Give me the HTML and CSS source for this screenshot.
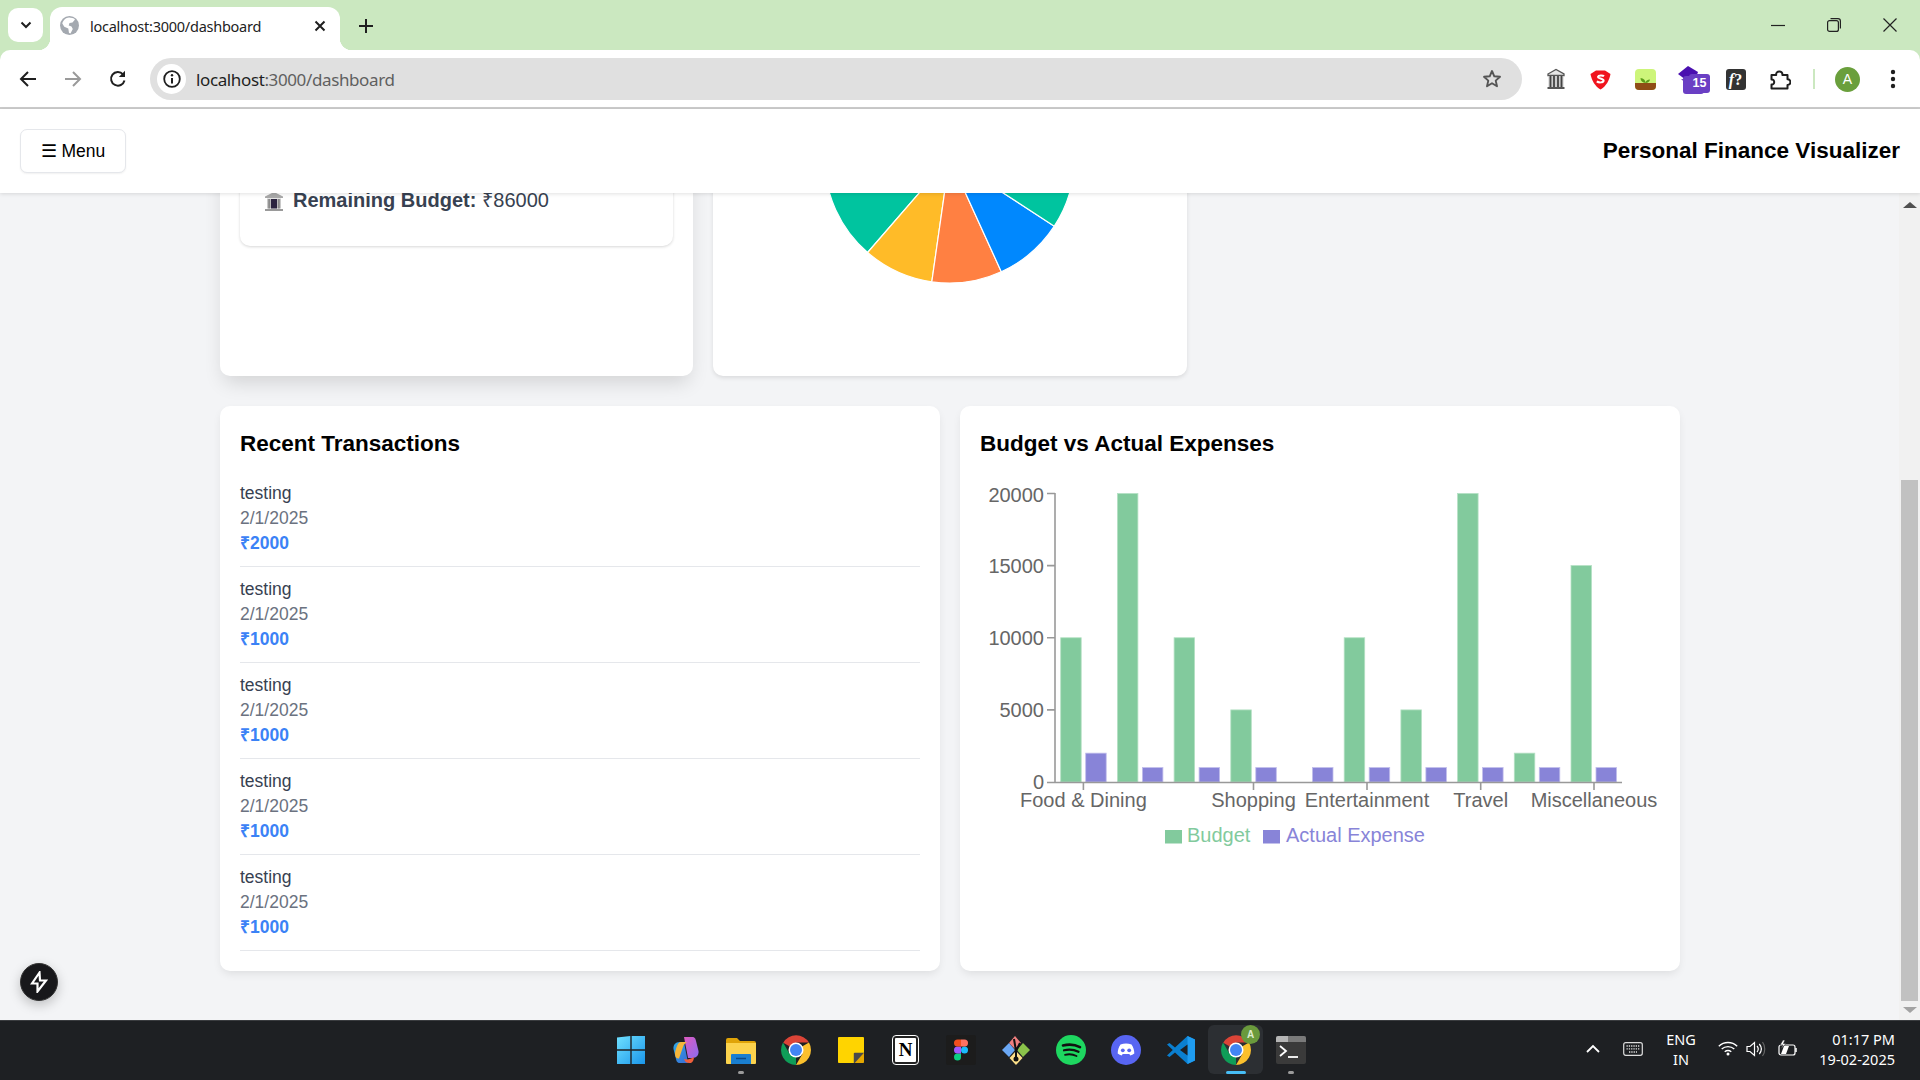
FILE: index.html
```html
<!DOCTYPE html>
<html lang="en">
<head>
<meta charset="utf-8">
<title>Personal Finance Visualizer</title>
<link rel="stylesheet" href="styles.css">
</head>
<body>
<div class="tabstrip">
  <button class="tabmenu"><svg width="14" height="14" viewBox="0 0 14 14"><path d="M2.500 4.500 7 9l4.500-4.500" fill="none" stroke="#1f1f1f" stroke-width="2"/></svg></button>
  <div class="tab">
    <svg class="globe" width="19" height="19" viewBox="0 0 19 19"><circle cx="9.500" cy="9.500" r="9.500" fill="#a4a9b0"/><path d="M9 1.500c2 .5 5 .4 6 2l-2.500 3-3 .6-.8 2.400 2.800 1 1.300 2.500-2.300 4.500-1.500-.5-.7-4.500-4-1.800-2-3.200C3 4 6 1.800 9 1.500Z" fill="#fff"/></svg>
    <span class="tabtitle">localhost:3000/dashboard</span>
    <svg class="tabclose" width="12" height="12" viewBox="0 0 12 12"><path d="M1.500 1.500l9 9m0-9-9 9" stroke="#1f1f1f" stroke-width="2"/></svg>
  </div>
  <div class="newtab"><svg width="14" height="14" viewBox="0 0 14 14"><path d="M7 0v14M0 7h14" stroke="#1f1f1f" stroke-width="2"/></svg></div>
  <div class="winctl">
    <span class="wincell"><svg width="14" height="14" viewBox="0 0 14 14"><path d="M0 7.500h14" stroke="#222" stroke-width="1.200"/></svg></span>
    <span class="wincell"><svg width="14" height="14" viewBox="0 0 14 14"><rect x=".6" y="2.600" width="10.800" height="10.800" rx="2" fill="none" stroke="#222" stroke-width="1.200"/><path d="M3.500.6h7.500a2.400 2.400 0 0 1 2.400 2.400v7.500" fill="none" stroke="#222" stroke-width="1.200"/></svg></span>
    <span class="wincell"><svg width="14" height="14" viewBox="0 0 14 14"><path d="M.5.500l13 13m0-13-13 13" stroke="#222" stroke-width="1.200"/></svg></span>
  </div>
</div>

<nav class="toolbar">
  <span class="navcell"><svg width="18" height="18" viewBox="0 0 18 18"><path d="M17 9H2M9 2 2 9l7 7" fill="none" stroke="#1f1f1f" stroke-width="2"/></svg></span>
  <span class="navcell"><svg width="18" height="18" viewBox="0 0 18 18"><path d="M1 9h15M9 2l7 7-7 7" fill="none" stroke="#9a9a9a" stroke-width="2"/></svg></span>
  <span class="navcell"><svg width="18" height="18" viewBox="0 0 18 18"><path d="M15.500 10.500A6.800 6.800 0 1 1 14 4.300" fill="none" stroke="#1f1f1f" stroke-width="2"/><path d="M16 .8v6.200H9.800z" fill="#1f1f1f"/></svg></span>
  <div class="address">
    <span class="siteinfo"><svg width="18" height="18" viewBox="0 0 18 18"><circle cx="9" cy="9" r="7.800" fill="none" stroke="#1f1f1f" stroke-width="1.800"/><path d="M9 8v5.500" stroke="#1f1f1f" stroke-width="2"/><circle cx="9" cy="5.200" r="1.200" fill="#1f1f1f"/></svg></span>
    <span class="url"><span class="host">localhost</span>:3000/dashboard</span>
    <span class="star"><svg width="20" height="20" viewBox="0 0 20 20"><path d="M10 2l2.300 5.300 5.700.5-4.300 3.800 1.300 5.600-5-3-5 3 1.300-5.600L2 7.800l5.700-.5z" fill="none" stroke="#555" stroke-width="1.900" stroke-linejoin="round"/></svg></span>
  </div>
  <div class="exts">
    <span class="navcell"><svg width="20" height="22" viewBox="0 0 20 22"><path d="M2 6 10 1.500 18 6v1.500H2z" fill="#e6e6e6" stroke="#555" stroke-width="1.300"/><path d="M2.500 8h15v11h-15z" fill="#ccc"/><path d="M4.500 8v11M8 8v11M12 8v11M15.500 8v11" stroke="#444" stroke-width="1.800"/><path d="M1.500 20h17" stroke="#555" stroke-width="2"/></svg></span>
    <span class="navcell"><svg width="21" height="21" viewBox="0 0 21 21"><path d="M10.500 20.500C5 17.500 1.500 11 .5 5L6 1.500h9L20.500 5c-1 6-4.500 12.500-10 15.500Z" fill="#f0141e"/><path d="M14 7.200c-1-1-5.500-1.200-6 .6-.4 2 6 1.400 5.600 4-.4 2-5 2-6.800.6" fill="none" stroke="#fff" stroke-width="2"/></svg></span>
    <span class="navcell"><svg width="21" height="21" viewBox="0 0 21 21"><rect width="21" height="21" rx="4" fill="#cdf57a"/><path d="M0 14h21v3a4 4 0 0 1-4 4H4a4 4 0 0 1-4-4z" fill="#8f4d16"/><path d="M10.500 14c0-3-2-4.500-5-5 0 3 2 4.500 5 5Zm0 0c0-2 2-3.500 4.500-3.500-.5 2-2 3.500-4.500 3.500Z" fill="#5c9e1a"/></svg></span>
    <span class="navcell ext-badge"><svg width="26" height="30" viewBox="0 0 26 30"><path d="M0 9 10 1l10 6-3 8H8L4 12z" fill="#4a10b0"/><path d="M3 14l6 5h8v-4H8z" fill="#3a0a96"/><rect x="8" y="10" width="21" height="18" rx="3" fill="#6a3fc4" transform="translate(-3 1)"/></svg><span class="badge15">15</span></span>
    <span class="navcell"><span class="fq"><i>f</i>?</span></span>
    <span class="navcell"><svg width="21" height="21" viewBox="0 0 21 21"><path d="M1.500 6h4.700c-.8-4.500 6.800-5 6.200 0h5.100v4.300c4-.3 3.700 6 0 5.700v3.500H1.500v-4c3.600.6 3.600-5.400 0-5z" fill="none" stroke="#1f1f1f" stroke-width="2" stroke-linejoin="round"/></svg></span>
  </div>
  <span class="tooldiv"></span>
  <span class="navcell avatarcell"><span class="avatar">A</span></span>
  <span class="navcell"><svg width="6" height="20" viewBox="0 0 6 20"><circle cx="3" cy="3" r="2.200" fill="#1f1f1f"/><circle cx="3" cy="10" r="2.200" fill="#1f1f1f"/><circle cx="3" cy="17" r="2.200" fill="#1f1f1f"/></svg></span>
</nav>

<header class="apphead">
  <button class="menubtn">☰ Menu</button>
  <h1 class="apptitle">Personal Finance Visualizer</h1>
</header>

<div class="viewport">
  <main class="page">
    <div class="toprow">
      <section class="card card-raised">
        <div class="summary">
          <p class="remaining">
            <svg class="bank" width="20" height="20" viewBox="0 0 20 20"><path d="M1 5.500 10 1l9 4.500V7H1z" fill="#a9a9a9"/><path d="M3 7.500h14v10H3z" fill="#c9c9c9"/><path d="M7 8h6v9.500H7z" fill="#2c2440"/><path d="M5.200 8v9.500M14.800 8v9.500" stroke="#8a8a8a" stroke-width="2"/><path d="M1 18h18v2H1z" fill="#9a9a9a"/></svg>
            <strong>Remaining Budget:</strong>
            <span>₹86000</span>
          </p>
        </div>
      </section>
      <section class="card card-pie">
        <svg class="pie" width="473" height="228" viewBox="713 148 473 228">
          <g stroke="#fff" stroke-width="1.200">
            <path d="M949.500 158 824.500 158A125 125 0 0 0 867.600 252.500Z" fill="#00C49F"/>
            <path d="M949.500 158 867.600 252.500A125 125 0 0 0 931.800 281.800Z" fill="#FFBB28"/>
            <path d="M949.500 158 931.800 281.800A125 125 0 0 0 1001.300 271.700Z" fill="#FF8042"/>
            <path d="M949.500 158 1001.300 271.700A125 125 0 0 0 1054.300 226.200Z" fill="#0088FE"/>
            <path d="M949.500 158 1054.300 226.200A125 125 0 0 0 1074.500 158Z" fill="#00C49F"/>
          </g>
        </svg>
      </section>
    </div>
    <div class="bottomrow">
      <section class="card card-pad">
        <h2 class="cardtitle">Recent Transactions</h2>
        <ul class="txlist">
          <li class="tx"><span class="txname">testing</span><span class="txdate">2/1/2025</span><span class="txamt">₹2000</span></li>
          <li class="tx"><span class="txname">testing</span><span class="txdate">2/1/2025</span><span class="txamt">₹1000</span></li>
          <li class="tx"><span class="txname">testing</span><span class="txdate">2/1/2025</span><span class="txamt">₹1000</span></li>
          <li class="tx"><span class="txname">testing</span><span class="txdate">2/1/2025</span><span class="txamt">₹1000</span></li>
          <li class="tx"><span class="txname">testing</span><span class="txdate">2/1/2025</span><span class="txamt">₹1000</span></li>
        </ul>
      </section>
      <section class="card card-pad">
        <h2 class="cardtitle">Budget vs Actual Expenses</h2>
        <svg class="chart" width="680" height="400" viewBox="980 481 680 400">
          <g class="bars-budget">
            <rect x="1060.700" y="637.750" width="20.500" height="144.250"/>
            <rect x="1117.400" y="493.500" width="20.500" height="288.500"/>
            <rect x="1174.100" y="637.750" width="20.500" height="144.250"/>
            <rect x="1230.800" y="709.900" width="20.500" height="72.100"/>
            <rect x="1344.200" y="637.750" width="20.500" height="144.250"/>
            <rect x="1400.900" y="709.900" width="20.500" height="72.100"/>
            <rect x="1457.600" y="493.500" width="20.500" height="288.500"/>
            <rect x="1514.300" y="753.150" width="20.500" height="28.850"/>
            <rect x="1571" y="565.600" width="20.500" height="216.400"/>
          </g>
          <g class="bars-actual">
            <rect x="1085.700" y="753.150" width="20.500" height="28.850"/>
            <rect x="1142.400" y="767.600" width="20.500" height="14.400"/>
            <rect x="1199.100" y="767.600" width="20.500" height="14.400"/>
            <rect x="1255.800" y="767.600" width="20.500" height="14.400"/>
            <rect x="1312.500" y="767.600" width="20.500" height="14.400"/>
            <rect x="1369.200" y="767.600" width="20.500" height="14.400"/>
            <rect x="1425.900" y="767.600" width="20.500" height="14.400"/>
            <rect x="1482.600" y="767.600" width="20.500" height="14.400"/>
            <rect x="1539.300" y="767.600" width="20.500" height="14.400"/>
            <rect x="1596" y="767.600" width="20.500" height="14.400"/>
          </g>
          <g class="axis">
            <path d="M1055 493v289.500M1047 782.500h575M1047 493.500h8M1047 565.600h8M1047 637.800h8M1047 709.900h8M1083.400 782v8M1253.500 782v8M1367 782v8M1480.700 782v8M1594 782v8"/>
          </g>
          <g class="ylabels">
            <text x="1044" y="502">20000</text>
            <text x="1044" y="572.700">15000</text>
            <text x="1044" y="644.700">10000</text>
            <text x="1044" y="717">5000</text>
            <text x="1044" y="788.700">0</text>
          </g>
          <g class="xlabels">
            <text x="1083.400" y="806.500">Food &amp; Dining</text>
            <text x="1253.500" y="806.500">Shopping</text>
            <text x="1367" y="806.500">Entertainment</text>
            <text x="1480.700" y="806.500">Travel</text>
            <text x="1594" y="806.500">Miscellaneous</text>
          </g>
          <rect x="1165" y="830" width="17" height="13.500" fill="#82ca9d"/>
          <text class="lg-budget" x="1187" y="842">Budget</text>
          <rect x="1263" y="830" width="17" height="13.500" fill="#8884d8"/>
          <text class="lg-actual" x="1286" y="842">Actual Expense</text>
        </svg>
      </section>
    </div>
  </main>
  <aside class="scrollbar">
    <span class="sb-up"></span>
    <span class="sb-thumb"></span>
    <span class="sb-down"></span>
  </aside>
  <button class="devbtn"><svg width="18" height="22" viewBox="0 0 18 22"><path d="M9.500 1.500 2 12.500h5.500L7.500 20.500 16 9.500h-6z" fill="none" stroke="#fff" stroke-width="2.200" stroke-linejoin="miter"/></svg></button>
</div>

<footer class="taskbar">
  <div></div>
  <div class="tb-apps">
    <span class="tb-app"><svg width="30" height="30" viewBox="0 0 30 30"><defs><linearGradient id="win" x1="0" y1="0" x2="1" y2="1"><stop offset="0" stop-color="#6fe0ff"/><stop offset="1" stop-color="#1a96ea"/></linearGradient></defs><path d="M1 2.500 14.300 1v13.300H1zM15.700 1H29v13.300H15.700zM1 15.700h13.300V29H1zM15.700 15.700H29V29H15.700z" fill="url(#win)"/></svg></span>
    <span class="tb-app"><svg width="30" height="30" viewBox="0 0 30 30"><defs><linearGradient id="cpa" x1="0" y1="0" x2="1" y2="1"><stop offset="0" stop-color="#2fb0ef"/><stop offset="1" stop-color="#3a6fe0"/></linearGradient><linearGradient id="cpb" x1="0" y1="0" x2="1" y2="1"><stop offset="0" stop-color="#e05ac0"/><stop offset="1" stop-color="#8a6cf0"/></linearGradient></defs><path d="M13 2h8c3 0 3.500 2 4 4l2.500 10c.5 4-2 7-6 7H17z" fill="url(#cpb)"/><path d="M17 28H9c-3 0-3.500-2-4-4L2.500 14c-.5-4 2-7 6-7H13z" fill="url(#cpa)" opacity=".95"/><path d="M5 14c-2 5-1 10 3 9.500L12 12c.5-2 2-4 4-5H10c-3 0-4 4-5 7Z" fill="#f5b53a"/><path d="M13 24c1 3 3 4 5 4h2c2-1 3-4 3-6-3 2-7 3-10 2Z" fill="#f0603c"/></svg></span>
    <span class="tb-app tb-open"><svg width="30" height="30" viewBox="0 0 30 30"><path d="M0 5a2 2 0 0 1 2-2h9l3 3h14a2 2 0 0 1 2 2v5H0z" fill="#e0a408"/><path d="M0 8h30v20a1 1 0 0 1-1 1H1a1 1 0 0 1-1-1z" fill="#fcd34d"/><path d="M5 20a1 1 0 0 1 1-1h18a1 1 0 0 1 1 1v9H5z" fill="#1a7fd0"/><path d="M10 23.500h10" stroke="#0b4a88" stroke-width="1.500"/></svg></span>
    <span class="tb-app"><svg width="36" height="36" viewBox="0 0 48 48"><use href="#chromeicon"/></svg></span>
    <span class="tb-app"><svg width="26" height="26" viewBox="0 0 28 28"><path d="M1 0h26a1 1 0 0 1 1 1v18l-9 9H1a1 1 0 0 1-1-1V1a1 1 0 0 1 1-1Z" fill="#ffd400"/><path d="M17 28V18a1 1 0 0 1 1-1h10v10a1 1 0 0 1-1 1z" fill="#4a4a4a"/><path d="M18 28l10-11v10a1 1 0 0 1-1 1z" fill="#e5a800"/></svg></span>
    <span class="tb-app"><span class="notion">N</span></span>
    <span class="tb-app tb-figma"><svg width="30" height="30" viewBox="0 0 30 30"><rect width="30" height="30" rx="2" fill="#1c1c1c"/><circle cx="18.500" cy="15" r="3.500" fill="#1abcfe"/><path d="M11.500 18.500H15V22a3.500 3.500 0 1 1-3.500-3.500Z" fill="#0acf83"/><path d="M11.500 11.500H15v7h-3.500a3.500 3.500 0 0 1 0-7Z" fill="#a259ff"/><path d="M11.500 4.500H15v7h-3.500a3.500 3.500 0 0 1 0-7Z" fill="#f24e1e"/><path d="M15 4.500h3.500a3.500 3.500 0 0 1 0 7H15z" fill="#ff7262"/></svg></span>
    <span class="tb-app"><svg width="30" height="30" viewBox="0 0 30 30"><path d="M15 1 21 8l-6 6-6-6z" fill="#f07f7f" transform="translate(-1 0)"/><path d="M22 8l7 7-7 7-6-7z" fill="#8bc34a"/><path d="M8 8l6 7-6 7-7-7z" fill="#6ba8f5"/><path d="M15 16l6.500 7L15 30l-6.500-7z" fill="#fde08a"/><path d="M13 4l2 12M19 8l-4 8M15 16v8" stroke="#111" stroke-width="2"/><circle cx="15" cy="24" r="2.500" fill="#111"/></svg></span>
    <span class="tb-app"><svg width="30" height="30" viewBox="0 0 30 30"><circle cx="15" cy="15" r="15" fill="#1ed760"/><g fill="none" stroke="#111" stroke-linecap="round"><path d="M7 10.500c6-1.600 12-1 17 1.600" stroke-width="2.600"/><path d="M8 15.300c5-1.300 10-.8 14.500 1.500" stroke-width="2.200"/><path d="M9 19.800c4-1 8-.6 11.500 1.200" stroke-width="1.800"/></g></svg></span>
    <span class="tb-app"><svg width="30" height="30" viewBox="0 0 30 30"><circle cx="15" cy="15" r="15" fill="#5865f2"/><path d="M9.500 9.500c3.500-1.200 7.500-1.200 11 0 1.800 2.600 2.800 5.500 2.800 9-1.300 1-2.600 1.600-4 2l-1-1.600H11.700l-1 1.600c-1.400-.4-2.700-1-4-2 0-3.500 1-6.400 2.800-9Z" fill="#fff"/><circle cx="11.800" cy="15.300" r="1.900" fill="#5865f2"/><circle cx="18.200" cy="15.300" r="1.900" fill="#5865f2"/></svg></span>
    <span class="tb-app"><svg width="30" height="30" viewBox="0 0 30 30"><path d="M21.500 1 29 4.500v21L21.500 29 9 17.500 3.500 22 1 20.500 6.800 15 1 9.500 3.500 8 9 12.500Z" fill="#0a7fd0"/><path d="M21.500 1 29 4.500v21L21.500 29Z" fill="#1f9cf0"/><path d="M21.500 9.500 14 15l7.500 5.500z" fill="#1c1f23"/></svg></span>
    <span class="tb-app tb-active"><svg width="36" height="36" viewBox="0 0 48 48"><use href="#chromeicon"/></svg><span class="tb-avatar">A</span></span>
    <span class="tb-app tb-open"><svg width="30" height="28" viewBox="0 0 30 28"><rect width="30" height="28" rx="2" fill="#3a3a3a"/><path d="M0 2a2 2 0 0 1 2-2h10v6H0z" fill="#b5b5b5"/><path d="M12 0h16a2 2 0 0 1 2 2v4H12z" fill="#7a7a7a"/><path d="M4 10l6 5-6 5" fill="none" stroke="#fff" stroke-width="1.800"/><path d="M12 21h10" stroke="#fff" stroke-width="1.800"/></svg></span>
  </div>
  <div class="tray">
    <svg class="tr-chev" width="14" height="9" viewBox="0 0 14 9"><path d="M1 8l6-6 6 6" fill="none" stroke="#fff" stroke-width="1.800"/></svg>
    <svg class="tr-kb" width="20" height="14" viewBox="0 0 20 14"><rect x=".7" y=".7" width="18.600" height="12.600" rx="2" fill="none" stroke="#ddd" stroke-width="1.200"/><path d="M3.500 4h13M3.500 6.800h13M6 10h8" stroke="#ddd" stroke-width="1.300" stroke-dasharray="1.300 1"/></svg>
    <span class="tr-lang">ENG<br>IN</span>
    <svg class="tr-wifi" width="20" height="15" viewBox="0 0 20 15"><g fill="none" stroke="#fff" stroke-width="1.400"><path d="M.8 5.200C6 .3 14 .3 19.200 5.200"/><path d="M3.700 8c3.500-3.200 9.100-3.200 12.600 0"/><path d="M6.700 10.800c1.900-1.500 4.700-1.500 6.600 0"/></g><circle cx="10" cy="13" r="1.500" fill="#fff"/></svg>
    <svg class="tr-vol" width="20" height="16" viewBox="0 0 20 16"><path d="M1 5.500h3L8.500 1.500v13L4 10.500H1z" fill="none" stroke="#fff" stroke-width="1.200"/><path d="M11 5c1.500 1.800 1.500 4.200 0 6M13.300 3c2.500 3 2.500 7 0 10" fill="none" stroke="#fff" stroke-width="1.200"/><path d="M16.500 1c3 4 3 10 0 14" fill="none" stroke="#666" stroke-width="1.200"/></svg>
    <svg class="tr-bat" width="20" height="18" viewBox="0 0 20 18"><rect x="1" y="5" width="16" height="10" rx="2" fill="none" stroke="#fff" stroke-width="1.200"/><path d="M18 8v4" stroke="#fff" stroke-width="1.500"/><path d="M3 14l3-8h5l-3 8z" fill="#fff"/><path d="M5 0 2 5h3L3 9l5-5.500H5.500L7 0z" fill="#fff" stroke="#1e2023" stroke-width=".6"/></svg>
    <span class="tr-clock"><span>01:17 PM</span><span>19-02-2025</span></span>
  </div>
</footer>

<svg class="defs" width="0" height="0" aria-hidden="true">
  <symbol id="chromeicon" viewBox="0 0 48 48">
    <path d="M24 24 7 14.200A20 20 0 0 1 41.300 14H24Z" fill="#db4437"/>
    <path d="M24 24 41.300 14A20 20 0 0 1 24 44l8.700-15z" fill="#fbc02d"/>
    <path d="M24 44A20 20 0 0 1 6.700 14l8.700 15L24 24z" fill="#0f9d58"/>
    <circle cx="24" cy="24" r="10" fill="#fff"/>
    <circle cx="24" cy="24" r="8" fill="#4285f4"/>
  </symbol>
</svg>
</body>
</html>
```
FILE: styles.css
```css
* { box-sizing: border-box; }
html, body { margin: 0; height: 100%; }
body {
  width: 1920px;
  height: 1080px;
  overflow: hidden;
  display: flex;
  flex-direction: column;
  font-family: "Liberation Sans", Arial, sans-serif;
  background: #cbe8c0;
  color: #000;
}
button { font-family: inherit; cursor: pointer; }
h1, h2, p, ul { margin: 0; padding: 0; }
ul { list-style: none; }

/* browser chrome */
.tabstrip { height: 50px; flex: none; display: flex; align-items: flex-end; padding-left: 8px; background: #cbe8c0; }
.tabmenu { width: 35px; height: 34px; margin: 0 7px 8px 0; border: 0; padding: 0; border-radius: 10px; background: #fff; display: flex; align-items: center; justify-content: center; }
.tab { position: relative; width: 290px; height: 43px; display: flex; align-items: center; padding: 0 14px 6px 10px; background: #fff; border-radius: 12px 12px 0 0; }
.tab::before, .tab::after { content: ""; position: absolute; bottom: 0; width: 12px; height: 12px; }
.tab::before { left: -12px; background: radial-gradient(circle at 0 0, transparent 12px, #fff 12.5px); }
.tab::after { right: -12px; background: radial-gradient(circle at 100% 0, transparent 12px, #fff 12.5px); }
.globe { flex: none; margin-right: 11px; }
.tabtitle { flex: 1; font: 14.5px "Noto Sans", sans-serif; color: #222; letter-spacing: -.25px; white-space: nowrap; }
.tabclose { flex: none; }
.newtab { width: 32px; height: 43px; margin-left: 10px; padding-bottom: 6px; display: flex; align-items: center; justify-content: center; }
.winctl { margin-left: auto; margin-right: 2px; height: 50px; display: flex; }
.wincell { width: 56px; display: flex; align-items: center; justify-content: center; }

.toolbar { height: 59px; flex: none; display: flex; align-items: center; padding: 1px 5px 0; background: #fff; border-bottom: 2px solid #ccc; border-radius: 10px 10px 0 0; }
.navcell { position: relative; width: 45px; height: 42px; flex: none; display: flex; align-items: center; justify-content: center; }
.address { flex: 1; height: 42px; margin: 0 10px; display: flex; align-items: center; padding: 0 15px 0 7px; border-radius: 21px; background: #e0e0e0; }
.siteinfo { width: 29px; height: 30px; flex: none; border-radius: 50%; background: #fff; display: flex; align-items: center; justify-content: center; margin-right: 10px; }
.url { flex: 1; font: 17px "Noto Sans", sans-serif; color: #5f5f5f; letter-spacing: -.38px; white-space: nowrap; }
.host { color: #1f1f1f; }
.star { width: 30px; display: flex; justify-content: center; }
.exts { display: flex; flex: none; margin-left: 1px; }
.ext-badge { padding-top: 2px; }
.badge15 { position: absolute; left: 21px; top: 16px; width: 21px; height: 19px; border-radius: 3px; background: #6a3fc4; color: #fff; font-size: 12.5px; font-weight: 700; line-height: 19px; text-align: center; }
.fq { width: 20px; height: 21px; border-radius: 3px; background: #333; color: #fff; font: 700 16px/21px "Liberation Serif", serif; text-align: center; }
.tooldiv { width: 2px; height: 20px; flex: none; margin: 0 10px; background: #cbe8c0; }
.avatar { width: 25px; height: 25px; border-radius: 50%; background: #6a9f3c; color: #fff; font-size: 14px; line-height: 25px; text-align: center; }

/* app header */
.apphead { position: relative; z-index: 2; height: 84px; flex: none; display: flex; align-items: center; justify-content: space-between; padding: 0 20px; background: #fff; box-shadow: 0 1px 4px rgba(0,0,0,.12); }
.menubtn { height: 44px; width: 106px; padding: 0; border: 1px solid #e5e7eb; border-radius: 7px; background: #fff; color: #000; font-size: 17.5px; box-shadow: 0 1px 2px rgba(0,0,0,.06); }
.apptitle { font-size: 22.5px; line-height: 30px; font-weight: 700; }

/* scrolled viewport */
.viewport { position: relative; flex: 1; min-height: 0; display: flex; overflow: hidden; background: #f3f4f6; }
.page { flex: 1; margin-top: -45px; padding-left: 220px; }
.toprow { width: 1460px; height: 228px; display: flex; gap: 20px; }
.bottomrow { width: 1460px; margin-top: 30px; height: 565px; display: flex; gap: 20px; }
.card { background: #fff; border-radius: 10px; }
.toprow .card { width: 473.3px; height: 228px; padding: 0 20px; box-shadow: 0 2px 4px rgba(0,0,0,.1); }
.toprow .card-raised { box-shadow: 0 10px 20px -4px rgba(0,0,0,.14); }
.toprow .card-pie { padding: 0; }
.pie { display: block; }
.summary { height: 98px; padding: 40px 24px 0; border-radius: 10px; background: #fff; box-shadow: 0 1px 3px rgba(0,0,0,.16); }
.remaining { display: flex; align-items: center; height: 25px; font-size: 20px; line-height: 25px; color: #374151; white-space: nowrap; }
.bank { margin-right: 9px; flex: none; }
.remaining strong { margin-right: 6px; }
.card-pad { width: 720px; padding: 20px; box-shadow: 0 4px 10px -2px rgba(0,0,0,.1); }
.cardtitle { font-size: 22.5px; line-height: 35px; font-weight: 700; margin-bottom: 20px; }
.tx { display: flex; flex-direction: column; padding-bottom: 10px; margin-bottom: 10px; border-bottom: 1px solid #e5e7eb; font-size: 17.5px; line-height: 25px; }
.tx:last-child { margin-bottom: 0; }
.txname { color: #374151; }
.txdate { color: #6b7280; }
.txamt { color: #3b82f6; font-weight: 700; }
.chart { display: block; }
.bars-budget rect { fill: #82ca9d; stroke: #b4e0c4; stroke-width: .8; }
.bars-actual rect { fill: #8884d8; stroke: #c0bdeb; stroke-width: .8; }
.axis path { fill: none; stroke: #999; stroke-width: 1.600; }
.chart text { font-size: 20px; fill: #666; }
.ylabels text { text-anchor: end; }
.xlabels text { text-anchor: middle; }
.chart .lg-budget { fill: #82ca9d; }
.chart .lg-actual { fill: #8884d8; }

.scrollbar { width: 21px; flex: none; display: flex; flex-direction: column; align-items: center; background: #f1f1f1; padding-top: 9px; }
.sb-up { border: 7px solid transparent; border-top: 0; border-bottom: 6px solid #505050; }
.sb-thumb { width: 17px; height: 521px; margin-top: auto; background: #c1c1c1; }
.sb-down { margin: 6px 0 7px; border: 7px solid transparent; border-bottom: 0; border-top: 6px solid #a3a3a3; }
.devbtn { position: absolute; left: 20px; top: 770px; width: 38px; height: 38px; padding: 0; border: 1px solid #333; border-radius: 50%; background: #18181b; display: flex; align-items: center; justify-content: center; box-shadow: 0 4px 12px rgba(0,0,0,.22); }

/* taskbar */
.taskbar { height: 60px; flex: none; display: grid; grid-template-columns: 1fr auto 1fr; align-items: center; padding-bottom: 2px; background: #1e2023; border-top: 1px solid #3a3c3f; }
.tb-apps { display: flex; height: 57px; align-items: center; margin-left: 1px; }
.tb-app { position: relative; width: 55px; height: 49px; display: flex; align-items: center; justify-content: center; }
.tb-open::after { content: ""; position: absolute; left: 50%; bottom: 0; width: 6px; height: 3px; margin-left: -3px; border-radius: 2px; background: #9b9b9b; }
.tb-active { background: #2c2f33; border-radius: 6px; }
.tb-active::after { content: ""; position: absolute; left: 50%; bottom: 0; width: 20px; height: 3px; margin-left: -10px; border-radius: 2px; background: #47bdf5; }
.tb-avatar { position: absolute; right: 3px; top: 0; width: 19px; height: 19px; border-radius: 50%; background: #6a9a3c; color: #dfeccf; font-size: 10px; font-weight: 700; line-height: 19px; text-align: center; }
.notion { width: 25px; height: 28px; border: 2px solid #222; outline: 1px solid #fff; border-radius: 3px; background: #fff; color: #000; font: 700 19px/24px "Liberation Serif", serif; text-align: center; }
.tray { display: flex; justify-content: flex-end; align-items: center; color: #fff; font: 14.5px/20px "Noto Sans", sans-serif; padding: 0 25px 2px 0; }
.tr-chev { margin-right: 23px; }
.tr-kb { margin-right: 12px; }
.tr-lang { width: 52px; margin-right: 11px; text-align: center; }
.tr-wifi { margin-right: 8px; }
.tr-vol { margin-right: 12px; }
.tr-bat { margin-right: 17px; }
.tr-clock { display: flex; flex-direction: column; align-items: flex-end; width: 80px; }
.defs { position: absolute; }
```
